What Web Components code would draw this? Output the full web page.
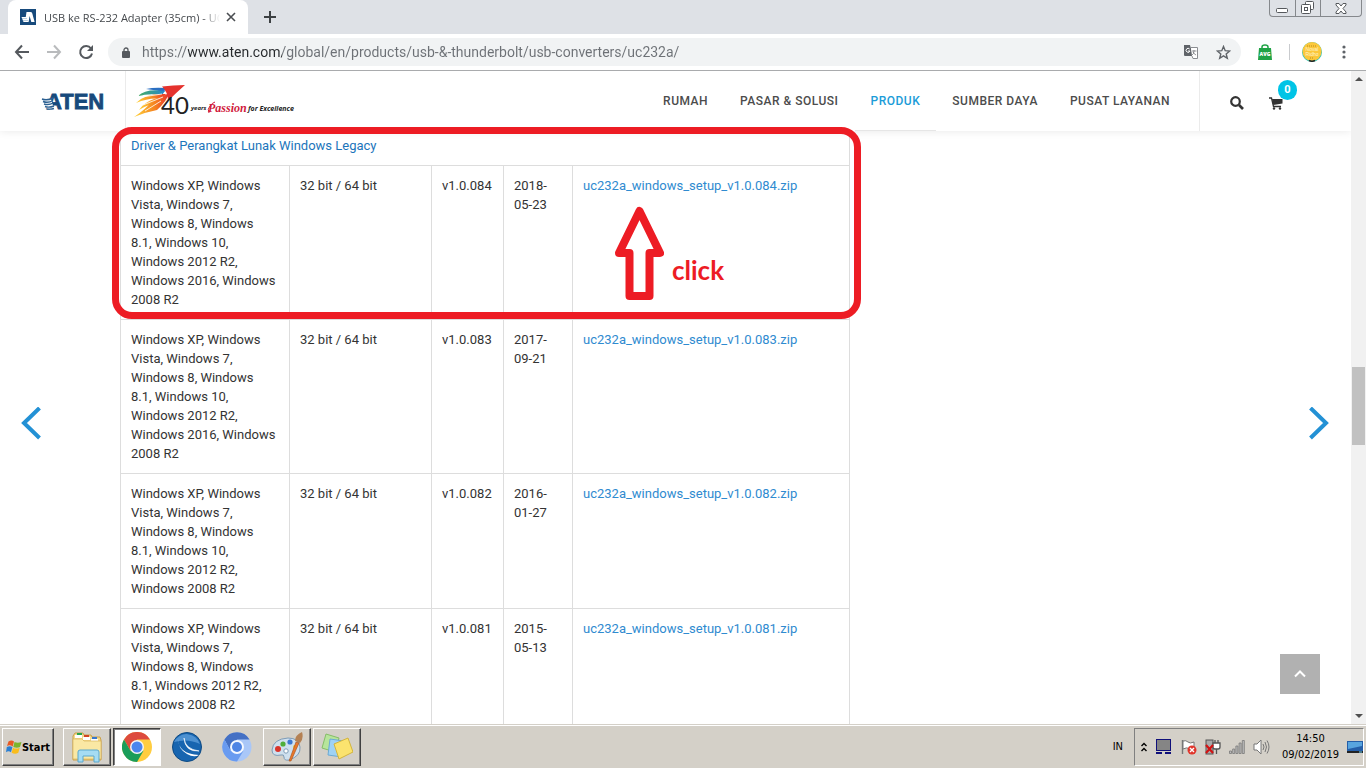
<!DOCTYPE html>
<html lang="id">
<head>
<meta charset="utf-8">
<title>USB ke RS-232 Adapter (35cm) - UC232A</title>
<style>
    html, body {
        margin: 0;
        height: 100%;
    }
    body {
        display: flex;
        flex-direction: column;
        overflow: hidden;
        background: #ffffff;
        font-family: Roboto, sans-serif;
        font-size: 13px;
        color: #333333;
    }
</style>
</head>
<body>
<browser-tabs>USB ke RS-232 Adapter (35cm) - UC</browser-tabs>
<browser-toolbar url="https://www.aten.com/global/en/products/usb-&amp;-thunderbolt/usb-converters/uc232a/"></browser-toolbar>
<page-view>
    <site-header slot="header">
        <nav-link>RUMAH</nav-link>
        <nav-link>PASAR &amp; SOLUSI</nav-link>
        <nav-link active>PRODUK</nav-link>
        <nav-link>SUMBER DAYA</nav-link>
        <nav-link>PUSAT LAYANAN</nav-link>
    </site-header>
    <driver-table>
        <click-note>click</click-note>
    </driver-table>
</page-view>
<task-bar></task-bar>

<script>
class BaseComponent extends HTMLElement
{
    constructor()
    {
        super();
        this.shadow = this.attachShadow({mode: "open" })
    }
    connectedCallback()
    {
        this.shadow.innerHTML = `${this.style()}${this.markup()}`;
    }
    style () { return ''; }
    markup () { return ''; }
}

class BrowserTabs extends BaseComponent
{
    style ()
    {
        return `
            <style>
                :host {
                    display: flex;
                    flex: none;
                    height: 34px;
                    background-color: #dee1e6;
                    font-family: "Open Sans", sans-serif;
                    font-size: 11px;
                    color: #45494d;
                }
                button {
                    border: 0;
                    padding: 0;
                    background: none;
                    display: flex;
                    align-items: center;
                    justify-content: center;
                }
                .tab {
                    display: flex;
                    align-items: center;
                    width: 216px;
                    margin-left: 8px;
                    padding: 0 12px;
                    border-radius: 8px 8px 0 0;
                    background-color: #ffffff;
                }
                .title {
                    flex: 1;
                    margin-left: 8px;
                    overflow: hidden;
                    white-space: nowrap;
                    -webkit-mask-image: linear-gradient(to right, #000 90%, transparent);
                    mask-image: linear-gradient(to right, #000 90%, transparent);
                }
                .close {
                    width: 10px;
                    margin-left: 6px;
                }
                .new {
                    width: 28px;
                    margin-left: 8px;
                }
                .window {
                    display: flex;
                    height: 16px;
                    margin-left: auto;
                    margin-right: 4px;
                    border: 1px solid #85888c;
                    border-top: 0;
                    border-radius: 0 0 4px 4px;
                }
                .window button {
                    width: 25px;
                }
                .window button + button {
                    border-left: 1px solid #85888c;
                }
                .window button:last-child {
                    width: 41px;
                }
            </style>
        `;
    }
    markup ()
    {
        return `
            <div class="tab">
                <svg width="16" height="16" viewBox="0 0 16 16">
                    <rect width="16" height="16" fill="#174a7c"/>
                    <path d="M6.500 3h3.800q1.600 0 2 1.400l2.300 8.600h-3.300L9.600 7l-1 6H5z" fill="#fff"/>
                    <path d="M1.500 8h5.500l1 5H3.500z" fill="#fff"/>
                    <path d="M2 9.500h5M3 11.500h5" stroke="#8fb0cf" stroke-width=".6"/>
                </svg>
                <span class="title"><slot></slot></span>
                <button class="close" aria-label="Tutup">
                    <svg width="10" height="10" viewBox="0 0 10 10" stroke="#4a4d51" stroke-width="1.600"><path d="M1 1l8 8M9 1l-8 8"/></svg>
                </button>
            </div>
            <button class="new" aria-label="Tab baru">
                <svg width="12" height="12" viewBox="0 0 12 12" stroke="#3c4043" stroke-width="2"><path d="M6 0v12M0 6h12"/></svg>
            </button>
            <div class="window">
                <button aria-label="Minimalkan">
                    <svg width="13" height="16" viewBox="0 0 13 16"><rect x=".5" y="8.500" width="11" height="4" rx="1" fill="#fff" stroke="#55585c"/></svg>
                </button>
                <button aria-label="Pulihkan">
                    <svg width="14" height="14" viewBox="0 0 14 14" fill="#fff" stroke="#55585c"><rect x="4.500" y=".5" width="8" height="8" rx="1"/><rect x=".5" y="3.500" width="9" height="9" rx="1"/><rect x="3.500" y="6.500" width="3" height="3"/></svg>
                </button>
                <button aria-label="Tutup jendela">
                    <svg width="12" height="11" viewBox="0 0 12 11"><path d="M1 .5h3l2 2.500 2-2.500h3v1.500L8 5.500 11 9v1.500H8L6 8l-2 2.500H1V9l3-3.500L1 2z" fill="#fff" stroke="#55585c"/></svg>
                </button>
            </div>
        `;
    }
}
customElements.define('browser-tabs', BrowserTabs);

class BrowserToolbar extends BaseComponent
{
    style ()
    {
        return `
            <style>
                :host {
                    display: flex;
                    flex: none;
                    align-items: center;
                    height: 36px;
                    padding: 0 14px 0 12px;
                    border-bottom: 1px solid #a9abad;
                    background-color: #ffffff;
                }
                button {
                    display: flex;
                    align-items: center;
                    justify-content: center;
                    width: 20px;
                    height: 20px;
                    padding: 0;
                    border: 0;
                    background: none;
                }
                .history {
                    display: flex;
                    gap: 12px;
                    margin-right: 12px;
                }
                .address {
                    flex: 1;
                    display: flex;
                    align-items: center;
                    height: 28px;
                    padding: 0 8px 0 14px;
                    border-radius: 14px;
                    background-color: #f1f3f4;
                }
                input {
                    flex: 1;
                    min-width: 0;
                    margin: 0 0 0 12px;
                    padding: 0;
                    border: 0;
                    outline: 0;
                    font-family: Roboto, sans-serif;
                    font-size: 14px;
                    line-height: 20px;
                    /* the host name is darker than the rest */
                    background: linear-gradient(to right, #6d7176 46px, #26292c 46px, #26292c 140px, #6d7176 140px);
                    -webkit-background-clip: text;
                    background-clip: text;
                    -webkit-text-fill-color: transparent;
                }
                .address button {
                    margin-left: 12px;
                }
                .extras {
                    display: flex;
                    align-items: center;
                    gap: 12px;
                    margin-left: 14px;
                }
                .divider {
                    width: 1px;
                    height: 16px;
                    margin-left: 2px;
                    background-color: #c9cbce;
                }
                .extras button:last-child {
                    width: 16px;
                    margin-left: 2px;
                }
            </style>
        `;
    }
    markup ()
    {
        return `
            <div class="history">
                <button aria-label="Kembali"><svg width="16" height="16" viewBox="0 0 16 16" fill="none" stroke="#55595e" stroke-width="2"><path d="M8 1.500L2 8l6 6.500M2 8h13"/></svg></button>
                <button aria-label="Maju"><svg width="16" height="16" viewBox="0 0 16 16" fill="none" stroke="#b9bbbd" stroke-width="2"><path d="M8 1.500L14 8l-6 6.500M14 8H1"/></svg></button>
                <button aria-label="Muat ulang"><svg width="16" height="16" viewBox="0 0 16 16"><path d="M13 4.500A6 6 0 1 0 14 9.500" fill="none" stroke="#55595e" stroke-width="2"/><path d="M15 1v6H9z" fill="#55595e"/></svg></button>
            </div>
            <div class="address">
                <svg width="8" height="11" viewBox="0 0 8 11"><rect y="4" width="8" height="7" rx="1" fill="#55595e"/><path d="M2 4.500V3a2 2 0 0 1 4 0v1.500" fill="none" stroke="#55595e" stroke-width="1.300"/></svg>
                <input type="text" aria-label="Alamat" value="${this.getAttribute('url').replace(/&/g, '&amp;')}">
                <button aria-label="Terjemahkan">
                    <svg width="14" height="14" viewBox="0 0 14 14"><path d="M0 0h6l3 11H1Q0 11 0 10z" fill="#5f6368"/><path d="M5.600 4a2 2 0 1 0 .4 2H4" fill="none" stroke="#fff"/><path d="M7 2.500h6.500v11H9L8 11" fill="#fff" stroke="#8a8d91"/><path d="M8 6h4.500M10 5v1q0 3-2 4M9 7q1 2 3 3" fill="none" stroke="#777a7e" stroke-width=".8"/></svg>
                </button>
                <button aria-label="Tandai">
                    <svg width="15" height="15" viewBox="0 0 15 15"><path d="M7.500 1.500l1.700 4.200 4.500.3-3.500 2.900 1.100 4.400-3.800-2.400-3.800 2.400 1.100-4.400L1.300 6l4.500-.3z" fill="none" stroke="#5f6368" stroke-width="1.400"/></svg>
                </button>
            </div>
            <div class="extras">
                <button aria-label="AVG">
                    <svg width="14" height="16" viewBox="0 0 14 16"><path d="M4 5V3q0-2 3-2t3 2v2" fill="none" stroke="#20a346" stroke-width="1.500"/><path d="M1 4h12l1 12H0z" fill="#20a346"/><text x="7" y="12" text-anchor="middle" font-family="Open Sans" font-size="5" font-weight="800" fill="#fff">AVG</text></svg>
                </button>
                <span class="divider"></span>
                <button aria-label="Profil">
                    <svg width="20" height="20" viewBox="0 0 20 20"><circle cx="10" cy="10" r="10" fill="#3ac1b0"/><circle cx="10" cy="9.500" r="9.500" fill="#fcc83a"/><path d="M7 18.500q3 1.500 6 0" stroke="#222" stroke-width="1.500" fill="none"/><path d="M5 4h10M8 16h4" stroke="#b68c20" stroke-width="1" stroke-dasharray="1 1"/><g font-family="Liberation Sans" font-size="5" fill="#fff4cf" text-anchor="middle"><text x="10" y="9">Noval</text><text x="10" y="14">Ridho</text></g></svg>
                </button>
                <button aria-label="Menu">
                    <svg width="4" height="14" viewBox="0 0 4 14" fill="#5f6368"><circle cx="2" cy="2" r="1.600"/><circle cx="2" cy="7" r="1.600"/><circle cx="2" cy="12" r="1.600"/></svg>
                </button>
            </div>
        `;
    }
}
customElements.define('browser-toolbar', BrowserToolbar);

class PageView extends BaseComponent
{
    style ()
    {
        return `
            <style>
                :host {
                    display: flex;
                    flex: 1;
                    min-height: 0;
                }
                .page {
                    position: relative;
                    flex: 1;
                    min-width: 0;
                    overflow: hidden;
                }
                .container {
                    max-width: 1111px;
                    margin: 0 auto;
                }
                button {
                    display: flex;
                    align-items: center;
                    justify-content: center;
                    padding: 0;
                    border: 0;
                    background: none;
                }
                .arrow {
                    position: absolute;
                    top: 54%;
                    transform: translateY(-50%);
                }
                .prev { left: 21px; }
                .next { right: 22px; }
                .top {
                    position: absolute;
                    right: 31px;
                    bottom: 30px;
                    width: 40px;
                    height: 40px;
                    background-color: #b1b1b1;
                }
                .scrollbar {
                    display: flex;
                    flex-direction: column;
                    align-items: center;
                    width: 15px;
                    background-color: #f1f1f1;
                }
                .scrollbar svg {
                    flex: none;
                    padding: 6px 0;
                }
                .before { flex: 280; }
                .thumb {
                    flex: 79;
                    width: 13px;
                    background-color: #c1c1c1;
                }
                .after { flex: 263; }
            </style>
        `;
    }
    markup ()
    {
        return `
            <div class="page">
                <slot name="header"></slot>
                <div class="container"><slot></slot></div>
                <button class="arrow prev" aria-label="Sebelumnya">
                    <svg width="20" height="34" viewBox="0 0 20 34"><path d="M18.500 1L3 16l15.500 15" fill="none" stroke="#2391d5" stroke-width="4"/></svg>
                </button>
                <button class="arrow next" aria-label="Berikutnya">
                    <svg width="20" height="34" viewBox="0 0 20 34"><path d="M1.500 1L17 16 1.500 31" fill="none" stroke="#2391d5" stroke-width="4"/></svg>
                </button>
                <button class="top" aria-label="Ke atas">
                    <svg width="12" height="8" viewBox="0 0 12 8"><path d="M1 6.500l5-5 5 5" fill="none" stroke="#fff" stroke-width="2"/></svg>
                </button>
            </div>
            <div class="scrollbar">
                <svg width="8" height="4" viewBox="0 0 8 4"><path d="M0 4l4-4 4 4z" fill="#505050"/></svg>
                <div class="before"></div>
                <div class="thumb"></div>
                <div class="after"></div>
                <svg width="8" height="4" viewBox="0 0 8 4"><path d="M0 0l4 4 4-4z" fill="#505050"/></svg>
            </div>
        `;
    }
}
customElements.define('page-view', PageView);

class SiteHeader extends BaseComponent
{
    style ()
    {
        return `
            <style>
                :host {
                    position: relative;
                    z-index: 1;
                    display: flex;
                    height: 60px;
                    background-color: #ffffff;
                    box-shadow: 0 1px 8px rgba(0, 0, 0, .08);
                }
                .logo {
                    display: flex;
                    align-items: center;
                    justify-content: flex-end;
                    width: 109px;
                    padding-right: 16px;
                    border-right: 1px solid #ebebeb;
                }
                .anniversary {
                    display: flex;
                    align-items: center;
                    padding-left: 7px;
                }
                nav {
                    display: flex;
                    margin-left: auto;
                    margin-right: 13px;
                }
                .tools {
                    display: flex;
                    align-items: center;
                    width: 152px;
                    box-sizing: border-box;
                    padding-left: 30px;
                    gap: 25px;
                    border-left: 1px solid #ebebeb;
                }
                button {
                    position: relative;
                    display: flex;
                    padding: 4px 0 0;
                    border: 0;
                    background: none;
                }
                .badge {
                    position: absolute;
                    left: 9px;
                    top: -13px;
                    width: 19px;
                    height: 20px;
                    border-radius: 10px;
                    background-color: #00c4e6;
                    color: #ffffff;
                    font: bold 11px/20px Roboto, sans-serif;
                    text-align: center;
                }
            </style>
        `;
    }
    markup ()
    {
        return `
            <a class="logo" href="#" aria-label="ATEN">
                <svg width="68" height="30" viewBox="0 0 68 30">
                    <text x="5" y="23" font-family="Liberation Sans" font-size="22" font-weight="700" fill="#174a7c" stroke="#174a7c" stroke-width=".8">ATEN</text>
                    <path d="M2 13h8l3 10H6z" fill="#fff"/>
                    <path d="M1 13q5 2 11-1M2 15.500q5 2 10-1M3 18q5 1.500 9-1M4 20.500q4 1.500 9-.5M6 23q4 .5 7-.5" stroke="#2c6091" stroke-width="1.400" fill="none"/>
                </svg>
            </a>
            <div class="anniversary">
                <svg width="164" height="36" viewBox="0 0 164 36">
                    <defs>
                        <linearGradient id="hot" x1="0" x2="1"><stop offset="0" stop-color="#ffd43a"/><stop offset=".6" stop-color="#f58220"/><stop offset="1" stop-color="#e8332c"/></linearGradient>
                        <linearGradient id="cool" x1="0" x2="1"><stop offset="0" stop-color="#46ae62"/><stop offset="1" stop-color="#2687cc"/></linearGradient>
                    </defs>
                    <path d="M13 6q8-2 20-1l-2 4q-9-2-18-3z" fill="#2b6fc2"/>
                    <path d="M5 13q8-8 27-5l-3 4q-13-2-24 1z" fill="url(#cool)"/>
                    <path d="M3 20q9-10 30-9l-4 5q-12-2-26 4z" fill="url(#hot)"/>
                    <path d="M6 27q8-12 29-14l-7 7q-11 0-22 7z" fill="url(#hot)"/>
                    <path d="M1 34q12-8 17-15l18-9q-2 8-12 17-11 2-23 7z" fill="url(#hot)"/>
                    <path d="M29 3.500q11-1.500 23-1.500-8 7-17 16 0-9-6-14.500z" fill="#e5322d"/>
                    <path d="M9 14l20-3M10 22l20-8M12 28l16-10" stroke="#fff" stroke-width=".8" fill="none"/>
                    <text x="28" y="31" font-family="Lato" font-size="24" fill="#222">40</text>
                    <text x="58" y="27" font-family="Open Sans" font-size="6" font-weight="700" font-style="italic" fill="#222">years</text>
                    <text x="75" y="29" font-family="Liberation Serif" font-size="12" font-weight="700" font-style="italic" fill="#d11b3c">Passion</text>
                    <path d="M76 30q-2-4 1-7 2-3 5-4" stroke="#d11b3c" fill="none"/>
                    <text x="115" y="28" font-family="Open Sans" font-size="7" font-weight="700" font-style="italic" fill="#222">for Excellence</text>
                </svg>
            </div>
            <nav><slot></slot></nav>
            <div class="tools">
                <button aria-label="Cari">
                    <svg width="14" height="14" viewBox="0 0 14 14" fill="none" stroke="#333"><circle cx="5.500" cy="5.500" r="4.300" stroke-width="2.200"/><path d="M9 9l4 4" stroke-width="2.600"/></svg>
                </button>
                <button aria-label="Keranjang">
                    <svg width="14" height="13" viewBox="0 0 14 13"><path d="M0 1h2.500l2 8.500H12" fill="none" stroke="#333" stroke-width="1.300"/><path d="M3 2h10.500v4.500L4.300 8z" fill="#333"/><circle cx="5" cy="11.500" r="1.200" fill="#333"/><circle cx="11" cy="11.500" r="1.200" fill="#333"/></svg>
                    <span class="badge">0</span>
                </button>
            </div>
        `;
    }
}
customElements.define('site-header', SiteHeader);

class NavLink extends BaseComponent
{
    style ()
    {
        return `
            <style>
                :host {
                    display: flex;
                }
                a {
                    padding: 0 16px;
                    font-size: 12px;
                    font-weight: 500;
                    line-height: 60px;
                    letter-spacing: .5px;
                    color: #4c4c4c;
                    text-decoration: none;
                }
                :host([active]) a {
                    color: #1b9cd8;
                    box-shadow: inset 0 -1px #e6e6e6;
                }
            </style>
        `;
    }
    markup ()
    {
        return `<a href="#"><slot></slot></a>`;
    }
}
customElements.define('nav-link', NavLink);

class DriverTable extends BaseComponent
{
    get rows ()
    {
        const common = 'Windows XP, Windows<br> Vista, Windows 7,<br> Windows 8, Windows<br> ';
        return [
            { os: common + '8.1, Windows 10,<br> Windows 2012 R2,<br> Windows 2016, Windows<br> 2008 R2', version: '1.0.084', date: '2018-05-23' },
            { os: common + '8.1, Windows 10,<br> Windows 2012 R2,<br> Windows 2016, Windows<br> 2008 R2', version: '1.0.083', date: '2017-09-21' },
            { os: common + '8.1, Windows 10,<br> Windows 2012 R2,<br> Windows 2008 R2', version: '1.0.082', date: '2016-01-27' },
            { os: common + '8.1, Windows 2012 R2,<br> Windows 2008 R2', version: '1.0.081', date: '2015-05-13' },
        ];
    }
    style ()
    {
        return `
            <style>
                :host {
                    display: block;
                    position: relative;
                    max-width: 730px;
                }
                table {
                    width: 100%;
                    border-collapse: collapse;
                    table-layout: fixed;
                    line-height: 19px;
                }
                th, td {
                    padding: 10px;
                    border: 1px solid #dddddd;
                    text-align: left;
                    vertical-align: top;
                    font-weight: normal;
                }
                th {
                    padding-top: 5px;
                    border-top: 0;
                    color: #1c75bb;
                }
                tr:last-child td {
                    padding-bottom: 20px;
                }
                a {
                    color: #2f8bd0;
                    text-decoration: none;
                }
                .os { width: 169px; }
                .bits { width: 142px; }
                .version { width: 72px; }
                .date { width: 69px; }
            </style>
        `;
    }
    markup ()
    {
        const body = this.rows.map(row => `
            <tr>
                <td>${row.os}</td>
                <td>32 bit / 64 bit</td>
                <td>v${row.version}</td>
                <td>${row.date}</td>
                <td><a href="#">uc232a_windows_setup_v${row.version}.zip</a></td>
            </tr>
        `).join('');
        return `
            <table>
                <colgroup>
                    <col class="os"><col class="bits"><col class="version"><col class="date"><col>
                </colgroup>
                <thead>
                    <tr><th colspan="5">Driver &amp; Perangkat Lunak Windows Legacy</th></tr>
                </thead>
                <tbody>${body}</tbody>
            </table>
            <slot></slot>
        `;
    }
}
customElements.define('driver-table', DriverTable);

class ClickNote extends BaseComponent
{
    style ()
    {
        return `
            <style>
                :host {
                    position: absolute;
                    z-index: 2;
                    top: -4px;
                    left: -8px;
                    right: -11px;
                    height: 192px;
                    box-sizing: border-box;
                    border: 7px solid #ed1c24;
                    border-radius: 20px;
                    pointer-events: none;
                }
                .note {
                    position: absolute;
                    top: 72px;
                    left: 496px;
                    display: flex;
                    align-items: center;
                    gap: 8px;
                    font: bold 26px/32px Lato, sans-serif;
                    color: #ed1c24;
                }
                span {
                    padding-top: 32px;
                }
            </style>
        `;
    }
    markup ()
    {
        return `
            <div class="note">
                <svg width="49" height="96" viewBox="0 0 49 96"><path d="M24.500 5L45 47H34.500v43h-20V47H4z" fill="#fff" stroke="#ed1c24" stroke-width="8" stroke-linejoin="round"/></svg>
                <span><slot></slot></span>
            </div>
        `;
    }
}
customElements.define('click-note', ClickNote);

class TaskButton extends BaseComponent
{
    style ()
    {
        return `
            <style>
                :host {
                    display: flex;
                }
                button {
                    display: flex;
                    align-items: center;
                    justify-content: center;
                    width: 48px;
                    padding: 0;
                    border: 1px solid transparent;
                    background: none;
                    font: bold 11px "DejaVu Sans Condensed", "DejaVu Sans", sans-serif;
                    color: #000000;
                }
                :host([raised]) button {
                    border-color: #ffffff #404040 #404040 #ffffff;
                    box-shadow: inset -1px -1px #808080;
                }
                :host([pressed]) button {
                    border-color: #404040 #ffffff #ffffff #404040;
                    box-shadow: inset 1px 1px #808080;
                    background-color: #ffffff;
                }
                :host([start]) button {
                    width: 52px;
                }
            </style>
        `;
    }
    markup ()
    {
        return `<button aria-label="${this.getAttribute('label')}"><slot></slot></button>`;
    }
}
customElements.define('task-button', TaskButton);

class TaskBar extends BaseComponent
{
    style ()
    {
        return `
            <style>
                :host {
                    display: flex;
                    flex: none;
                    height: 38px;
                    padding: 4px 2px 2px;
                    background-color: #d4d0c8;
                    box-shadow: inset 0 1px #d4d0c8, inset 0 2px #ffffff;
                    font: 11px/16px "DejaVu Sans Condensed", "DejaVu Sans", sans-serif;
                    color: #000000;
                }
                .apps {
                    display: flex;
                    gap: 2px;
                    margin-left: 9px;
                }
                .lang {
                    margin: auto 11px auto auto;
                }
                .tray {
                    display: flex;
                    align-items: center;
                    gap: 8px;
                    padding: 0 0 0 6px;
                    border: 1px solid #808080;
                    border-right-color: #ffffff;
                    border-bottom-color: #ffffff;
                }
                time {
                    margin: 0 0 0 4px;
                    text-align: center;
                }
            </style>
        `;
    }
    markup ()
    {
        return `
            <task-button start raised label="Start">
                <svg width="16" height="16" viewBox="0 0 16 16"><path d="M2.500 2.500q3-2 5.500 0L6.700 7.500Q4 5.500 1 7z" fill="#e85a24"/><path d="M8.500 3q3 1.500 7 0l-1.500 5Q11 9.500 7.300 8z" fill="#7cb52c"/><path d="M.8 8q3-1.700 5.600 0L5 13.200q-2.500-2-5 0z" fill="#2a7fd3"/><path d="M7 8.700q3 1.800 6.700 0l-1.400 5q-3 2-6.700 0z" fill="#f9bd1c"/></svg>
                Start
            </task-button>
            <div class="apps">
                <task-button raised label="Explorer">
                    <svg width="34" height="32" viewBox="0 0 34 32"><path d="M3 5l2-3h8l1 2h7l1 2h8l1 3v20H3z" fill="#f3d88a" stroke="#c9a04a"/><path d="M7 2h5v2H7z" fill="#26a54a"/><path d="M14 4h5v2h-5z" fill="#d24324"/><path d="M22 6h5v2h-5z" fill="#3777ce"/><path d="M5 4h7v3H5zM13 6h7v3h-7zM21 8h7v2h-7z" fill="#fff"/><path d="M3 8h9l2 2h17v18H3z" fill="#fae8a4" stroke="#d3ab4e" stroke-width=".6"/><path d="M8 31V21q0-2 2-2h17q2 0 2 2v10h-5v-6H13v6z" fill="#a5dcf3" stroke="#5aa8cd"/></svg>
                </task-button>
                <task-button pressed label="Chrome">
                    <svg width="30" height="30" viewBox="0 0 30 30"><circle cx="15" cy="15" r="15" fill="#ffcd40"/><path d="M2 7.500A15 15 0 0 1 28 7.500H15L8.500 18.700z" fill="#dd4b3e"/><path d="M2 7.500A15 15 0 0 0 15 30l6.500-11.200H8.500z" fill="#1a9d5a"/><circle cx="15" cy="15" r="7" fill="#f4f4f4"/><circle cx="15" cy="15" r="5.500" fill="#4a86ee"/></svg>
                </task-button>
                <task-button label="Koneksi">
                    <svg width="30" height="30" viewBox="0 0 30 30"><circle cx="15" cy="15" r="14.500" fill="#1765b0" stroke="#0e4a83"/><path d="M2 10a14 14 0 0 1 26 2q-12-6-26-2z" fill="#4d91d1"/><path d="M6 6q0 16 21 17-5 3-12-1Q6 17 6 6z" fill="#fff"/><path d="M12 6q1 11 15 13-14 1-15-13z" fill="#fff" stroke="#fff" stroke-width=".6"/></svg>
                </task-button>
                <task-button label="Chromium">
                    <svg width="30" height="30" viewBox="0 0 30 30"><circle cx="15" cy="15" r="14.500" fill="#a9c7f8"/><path d="M2.400 7.500A14.500 14.500 0 0 1 27.600 7.500H15L8.500 18.700z" fill="#4470c4"/><path d="M2.400 7.500A14.500 14.500 0 0 0 15 29.500l6.500-10.700H8.500z" fill="#699bf0"/><circle cx="15" cy="15" r="7" fill="#f4f8ff"/><circle cx="15" cy="15" r="5" fill="#4f85e4"/></svg>
                </task-button>
                <task-button raised label="Paint">
                    <svg width="32" height="32" viewBox="0 0 32 32"><path d="M17 7Q28 7 29 16T18 29q-5 1-5-3 0-3-3-2-9 2-9-5Q2 8 17 7z" fill="#cfe0ee" stroke="#7d9bb7"/><circle cx="7" cy="18" r="3" fill="#d9342b"/><circle cx="12" cy="13" r="2.600" fill="#4eae3a"/><circle cx="19" cy="11" r="2.600" fill="#3b78d1"/><circle cx="15" cy="20" r="2.200" fill="#fff" stroke="#7d9bb7"/><circle cx="24" cy="16" r="2" fill="#f2c62e"/><path d="M18 30l7-19 3 1-8 18z" fill="#e8782c" stroke="#a54d17" stroke-width=".6"/><path d="M24 10q0-6 7-9 2 6-2 11z" fill="#b48154"/></svg>
                </task-button>
                <task-button raised label="Sticky Notes">
                    <svg width="32" height="28" viewBox="0 0 32 28"><path d="M5 1l13 4-4 14L1 15z" fill="#b7e59b" stroke="#86bd68"/><path d="M9 6l14 2-2 16L7 22z" fill="#9fd2f4" stroke="#6baad4"/><path d="M13 11l14-6 5 14-14 7z" fill="#fbe36e" stroke="#d3b43c"/></svg>
                </task-button>
            </div>
            <span class="lang">IN</span>
            <div class="tray">
                <svg width="6" height="10" viewBox="0 0 6 10" fill="none" stroke="#000" stroke-width="1.400"><path d="M.5 4L3 1.500 5.500 4M.5 9L3 6.500 5.500 9"/></svg>
                <svg width="18" height="16" viewBox="0 0 18 16"><rect x="1.500" y=".5" width="14" height="11" fill="#858585" stroke="#10107a"/><path d="M1 14h6M10 14h6" stroke="#10107a" stroke-width="2"/></svg>
                <svg width="16" height="16" viewBox="0 0 16 16"><path d="M1.500 1v14" stroke="#777" stroke-width="1.400"/><path d="M2 2q3-1 5 1t6 0v7q-3 1-5-.5T2 10z" fill="#fff" stroke="#777"/><circle cx="11" cy="11" r="4.500" fill="#e0352b"/><path d="M9 9l4 4M13 9l-4 4" stroke="#fff" stroke-width="1.400"/></svg>
                <svg width="16" height="16" viewBox="0 0 16 16"><rect x="1" y="1" width="7" height="14" fill="#aaa" stroke="#555"/><path d="M8 4h7v4q0 2-2 2h-3q-2 0-2-2zM10 1v3M13 1v3M11.500 10v5" fill="#fff" stroke="#555" stroke-width="1.300"/><path d="M1 6l7 8M8 6l-7 8" stroke="#d31414" stroke-width="2.200"/></svg>
                <svg width="16" height="14" viewBox="0 0 16 14" fill="#bdbdbd" stroke="#777" stroke-width=".8"><path d="M.5 11h2v2.500h-2zM3.700 9h2v4.500h-2zM6.900 6h2v7.500h-2zM10.100 3h2v10.500h-2zM13.300.5h2v13h-2z"/></svg>
                <svg width="17" height="16" viewBox="0 0 17 16" fill="none" stroke="#777"><path d="M1 5h3l4-4v14l-4-4H1z" fill="#fff"/><path d="M10 5q2 3 0 6M12 3q3 5 0 10M14 1.500q4 6.500 0 13"/></svg>
                <time>14:50<br>09/02/2019</time>
                <svg width="16" height="12" viewBox="0 0 16 12"><rect width="16" height="10" fill="#245ea8"/><path d="M1 1h14v4L1 8z" fill="#58a5df"/><path d="M0 11h16" stroke="#222" stroke-width="2"/><path d="M12 11h3" stroke="#6fd4f5"/></svg>
            </div>
        `;
    }
}
customElements.define('task-bar', TaskBar);
</script>
</body>
</html>
